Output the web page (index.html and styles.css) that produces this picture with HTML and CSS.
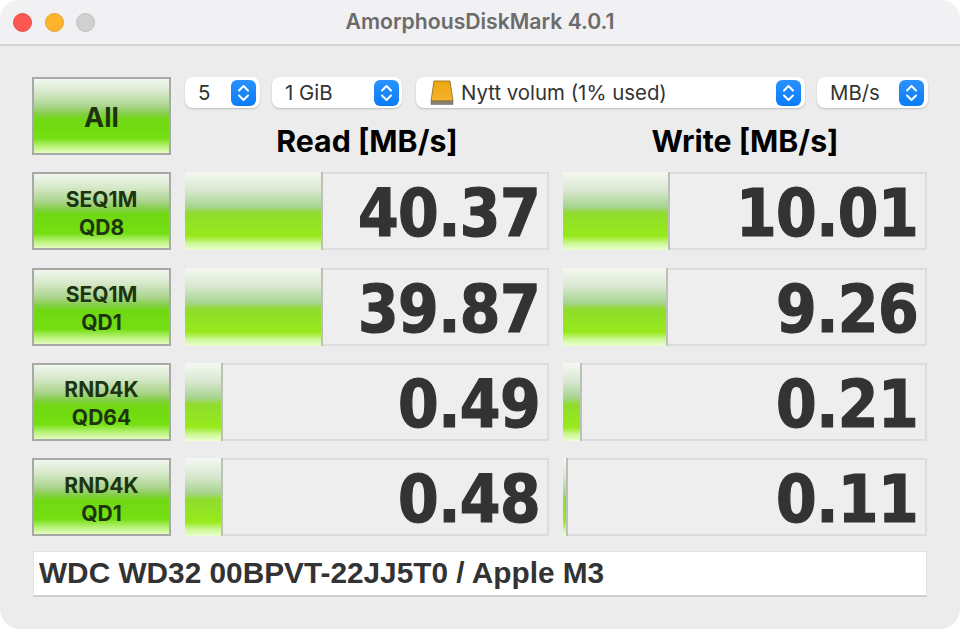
FILE: index.html
```html
<!DOCTYPE html>
<html lang="en">
<head>
    <meta charset="UTF-8">
    <title>AmorphousDiskMark 4.0.1</title>
    <link rel="stylesheet" href="styles.css">
</head>
<body>
    <div class="window">
        <div class="titlebar">
            <div class="lights">
                <span class="light red"></span>
                <span class="light yellow"></span>
                <span class="light grey"></span>
            </div>
            <div class="title">AmorphousDiskMark 4.0.1</div>
        </div>
        <div class="content">
            <div class="grid">
                <div class="btn btn-all">All</div>
                <div class="top">
                    <div class="selects">
                        <div class="select s-count"><span>5</span><i class="stepper"><svg viewBox="0 0 25 26"><path d="M8 10.5 12.5 6 17 10.5M8 15.5 12.5 20 17 15.5"/></svg></i></div>
                        <div class="select s-size"><span>1 GiB</span><i class="stepper"><svg viewBox="0 0 25 26"><path d="M8 10.5 12.5 6 17 10.5M8 15.5 12.5 20 17 15.5"/></svg></i></div>
                        <div class="select s-drive">
                            <svg class="drive" viewBox="0 0 24 26">
                                <defs>
                                    <linearGradient id="dg" x1="0" y1="0" x2="0" y2="1">
                                        <stop offset="0" stop-color="#eda70f"/>
                                        <stop offset="1" stop-color="#f7b32c"/>
                                    </linearGradient>
                                </defs>
                                <path d="M4 1H20L23 21H1Z" fill="url(#dg)" stroke="#8a6a24" stroke-width=".8"/>
                                <path d="M1 21H23V24.5H1Z" fill="#8a8172" stroke="#6b6357" stroke-width=".5"/>
                            </svg>
                            <span>Nytt volum (1% used)</span><i class="stepper"><svg viewBox="0 0 25 26"><path d="M8 10.5 12.5 6 17 10.5M8 15.5 12.5 20 17 15.5"/></svg></i>
                        </div>
                        <div class="select s-unit"><span>MB/s</span><i class="stepper"><svg viewBox="0 0 25 26"><path d="M8 10.5 12.5 6 17 10.5M8 15.5 12.5 20 17 15.5"/></svg></i></div>
                    </div>
                    <div class="heads">
                        <div class="head">Read [MB/s]</div>
                        <div class="head">Write [MB/s]</div>
                    </div>
                </div>

                <div class="btn">SEQ1M<br>QD8</div>
                <div class="panel"><div class="bar" style="width:138px"></div><div class="num">40.37</div></div>
                <div class="panel"><div class="bar" style="width:107px"></div><div class="num">10.01</div></div>

                <div class="btn">SEQ1M<br>QD1</div>
                <div class="panel"><div class="bar" style="width:138px"></div><div class="num">39.87</div></div>
                <div class="panel"><div class="bar" style="width:105px"></div><div class="num">9.26</div></div>

                <div class="btn">RND4K<br>QD64</div>
                <div class="panel"><div class="bar" style="width:38px"></div><div class="num">0.49</div></div>
                <div class="panel"><div class="bar" style="width:19px"></div><div class="num">0.21</div></div>

                <div class="btn">RND4K<br>QD1</div>
                <div class="panel"><div class="bar" style="width:38px"></div><div class="num">0.48</div></div>
                <div class="panel"><div class="bar" style="width:5px"></div><div class="num">0.11</div></div>
            </div>
            <div class="comment">WDC WD32 00BPVT-22JJ5T0 / Apple M3</div>
        </div>
    </div>
</body>
</html>
```

FILE: styles.css
```css
*{
    margin: 0;
    padding: 0;
    box-sizing: border-box;
}
html, body{
    width: 960px;
    height: 629px;
    background-color: #fff;
    overflow: hidden;
}
.window{
    width: 960px;
    height: 629px;
    border-radius: 20px;
    background-color: #ececec;
    overflow: hidden;
    font-family: Inter, "Liberation Sans", sans-serif;
}
.titlebar{
    height: 46px;
    background-color: #f1f1f3;
    border-bottom: 2px solid #d4d4d4;
    position: relative;
    display: flex;
    align-items: center;
    justify-content: center;
}
.lights{
    position: absolute;
    left: 13px;
    top: 13px;
    display: flex;
    gap: 12.5px;
}
.light{
    width: 19px;
    height: 19px;
    border-radius: 50%;
}
.red{
    background-color: #fc5753;
    border: 1px solid #e64b47;
}
.yellow{
    background-color: #fdb32c;
    border: 1px solid #e6a229;
}
.grey{
    background-color: #d0d0d2;
    border: 1px solid #bdbdbf;
}
.title{
    font-size: 21.2px;
    font-weight: 600;
    color: #6b6b6b;
    margin-top: -2px;
}
.content{
    padding: 31px 32px 0;
}
.grid{
    display: grid;
    grid-template-columns: 139px 364px 364px;
    grid-auto-rows: 78px;
    column-gap: 14px;
    row-gap: 17.3px;
}
.btn{
    display: flex;
    align-items: center;
    justify-content: center;
    text-align: center;
    border: 2px solid #a8a8a8;
    background: linear-gradient(#f1f7ee 0%, #d6e8ca 18%, #a8d388 38%, #84cf48 47%, #70d812 55%, #74e012 80%, #b8f278 91%, #e4fcc0 100%);
    font-size: 21px;
    line-height: 28px;
    font-weight: 700;
    color: #1e3410;
    padding-top: 5px;
}
.btn-all{
    font-size: 27px;
    padding-top: 3px;
}
.top{
    grid-column: 2 / 4;
}
.selects{
    display: flex;
    height: 31px;
}
.select{
    flex-shrink: 0;
    height: 31px;
    background-color: #fff;
    border-radius: 8px;
    box-shadow: 0 1px 2px rgba(0, 0, 0, .2);
    display: flex;
    align-items: center;
    font-size: 20.4px;
    color: #333;
    padding-left: 13px;
    padding-right: 3px;
}
.select span{
    flex: 1;
}
.s-count{
    width: 75px;
    margin-right: 12px;
    padding-right: 4px;
}
.s-size{
    width: 130px;
    margin-right: 14px;
}
.s-drive{
    width: 389px;
    margin-right: 12px;
    padding-right: 4px;
}
.s-unit{
    width: 111px;
    padding-right: 4px;
}
.drive{
    width: 24px;
    height: 26px;
    margin-right: 7px;
    margin-left: 1px;
}
.stepper{
    width: 25px;
    height: 26px;
    border-radius: 6px;
    background: linear-gradient(#2a92ff, #0a7cf8);
    display: block;
}
.stepper svg{
    display: block;
    width: 25px;
    height: 26px;
}
.stepper path{
    fill: none;
    stroke: #fff;
    stroke-width: 2;
    stroke-linecap: round;
    stroke-linejoin: round;
}
.heads{
    display: grid;
    grid-template-columns: 364px 364px;
    column-gap: 14px;
    margin-top: 16px;
}
.head{
    text-align: center;
    font-size: 30.3px;
    line-height: 35px;
    font-weight: 700;
    color: #000;
}
.panel{
    display: flex;
    background-color: #eeeeee;
    border: 2px solid #dcdcdc;
    position: relative;
}
.bar{
    position: absolute;
    left: -2px;
    top: -2px;
    bottom: -2px;
    background: linear-gradient(#f5f8f3 0%, #d8e7cf 24%, #a6d48e 45%, #8fdc2c 53%, #98ea1c 82%, #cef89a 92%, #ecffd0 100%);
    border-right: 2px solid #bcc0b8;
}
.num{
    position: relative;
    flex: 1;
    text-align: right;
    font-family: "DejaVu Sans Condensed", "DejaVu Sans", sans-serif;
    font-stretch: condensed;
    font-size: 65px;
    font-weight: 700;
    line-height: 80px;
    letter-spacing: -.6px;
    -webkit-text-stroke: 1.2px #333;
    color: #333;
    padding-right: 7px;
}
.comment{
    height: 46px;
    margin: 15px 1px 0;
    background-color: #fff;
    border: 1px solid #e2e2e2;
    border-bottom: 2px solid #cfcfcf;
    font-family: "Liberation Sans", sans-serif;
    font-size: 29.8px;
    font-weight: 700;
    line-height: 42px;
    color: #333;
    padding-left: 5px;
}
```
